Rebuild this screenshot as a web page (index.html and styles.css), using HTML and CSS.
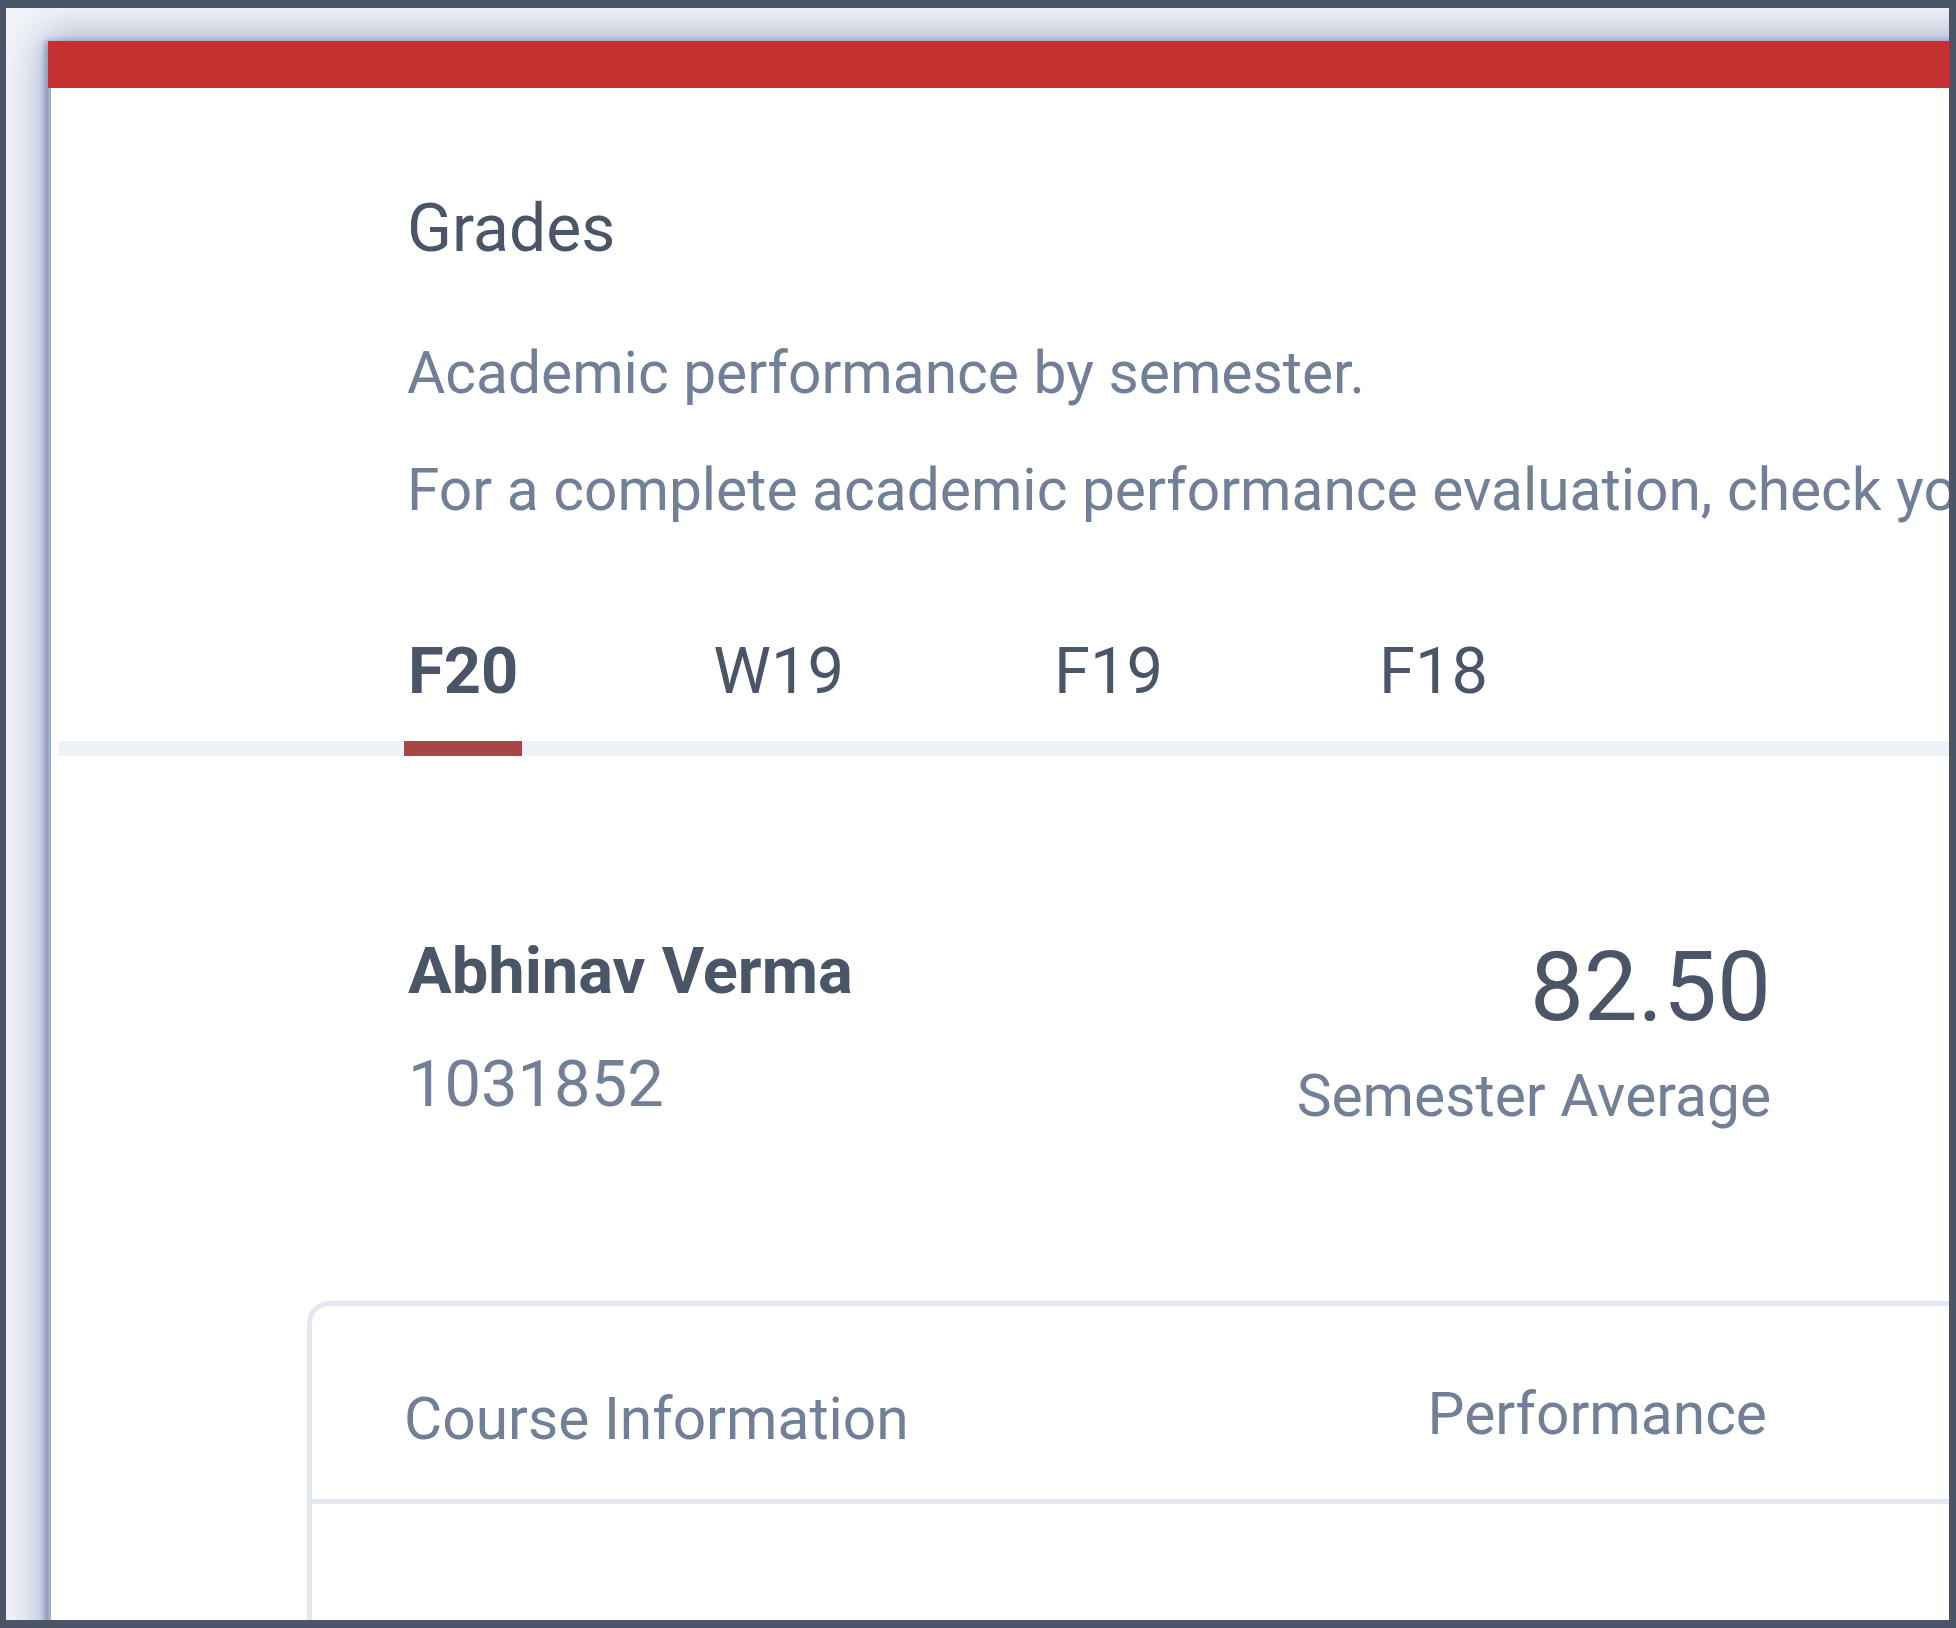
FILE: index.html
```html
<!DOCTYPE html>
<html lang="en">
<head>
<meta charset="utf-8">
<title>Grades</title>
<link rel="stylesheet" href="styles.css">
</head>
<body>
<div class="viewport">
  <div class="card">
    <div class="card-top"></div>
    <div class="card-body">
      <div class="intro">
        <h1 class="title">Grades</h1>
        <p class="lead">Academic performance by semester.</p>
        <p class="lead">For a complete academic performance evaluation, check your unofficial transcript.</p>
      </div>
      <nav class="tabs">
        <a class="tab active">F20</a>
        <a class="tab">W19</a>
        <a class="tab">F19</a>
        <a class="tab">F18</a>
      </nav>
      <section class="student">
        <div class="who">
          <div class="name">Abhinav Verma</div>
          <div class="sid">1031852</div>
        </div>
        <div class="avg">
          <div class="avg-value">82.50</div>
          <div class="avg-label">Semester Average</div>
        </div>
      </section>
      <div class="table">
        <div class="thead">
          <div class="th-inner">
            <span class="th">Course Information</span>
            <span class="th th-right">Performance</span>
          </div>
        </div>
        <div class="tbody"></div>
      </div>
    </div>
  </div>
</div>
</body>
</html>
```
FILE: styles.css
```css
* { box-sizing: border-box; }
html, body { margin: 0; padding: 0; }
body {
  background: #4a5568;
  padding: 8px 7px 8px 6px;
  font-family: Roboto, "Liberation Sans", sans-serif;
  color: #4a5568;
}
.viewport {
  width: 1943px;
  height: 1612px;
  overflow: hidden;
  background: #f2f5f9;
}
.card {
  margin: 33px 0 0 42px;
  width: 1980px;
  background: #fff;
  box-shadow: 0 0 40px 4px rgba(92, 110, 165, 0.6), -3px 0 6px rgba(110, 128, 175, 0.7);
}
.card-top {
  height: 47px;
  background: #c53030;
}
.card-body {
  border-left: 3px solid #a3b0ca;
  padding-top: 102px;
  padding-bottom: 300px;
}
.intro { margin-left: 356px; }
.title {
  margin: 0;
  font-size: 66px;
  line-height: 78px;
  font-weight: 400;
  color: #4a5568;
}
.lead {
  margin: 30px 0 0;
  font-size: 58.7px;
  line-height: 87px;
  color: #718096;
  white-space: nowrap;
}
.title + .lead { margin-top: 62px; }

.tabs {
  display: flex;
  margin: 98px 0 0 8px;
  border-bottom: 15px solid #edf2f7;
}
.tab {
  display: block;
  padding: 0 4px 31px;
  font-size: 65px;
  line-height: 78px;
  color: #4a5568;
}
.tab:nth-child(1) { margin-left: 345px; }
.tab:nth-child(2) { margin-left: 187px; }
.tab:nth-child(3) { margin-left: 202px; }
.tab:nth-child(4) { margin-left: 208px; }
.tab.active {
  font-weight: 700;
  margin-bottom: -15px;
  border-bottom: 15px solid #a84545;
}

.student {
  display: flex;
  justify-content: space-between;
  align-items: flex-start;
  width: 1363px;
  margin: 176px 0 0 357px;
}
.name {
  font-size: 65px;
  line-height: 78px;
  font-weight: 700;
  color: #4a5568;
}
.sid {
  margin-top: 35px;
  font-size: 65px;
  line-height: 78px;
  color: #718096;
}
.avg { text-align: right; margin-top: -2px; }
.avg-value {
  font-size: 96px;
  line-height: 115px;
  color: #4a5568;
}
.avg-label {
  margin-top: 8px;
  font-size: 58.7px;
  line-height: 87px;
  color: #718096;
}

.table {
  margin: 161px 0 0 256px;
  border: 5px solid #e2e8f0;
  border-radius: 22px;
  background: #fff;
}
.thead {
  padding: 70px 0 36px 92px;
  border-bottom: 5px solid #e2e8f0;
}
.th-inner {
  display: flex;
  justify-content: space-between;
  align-items: flex-start;
  width: 1363px;
}
.th {
  font-size: 58.7px;
  line-height: 87px;
  color: #718096;
}
.th-right { margin-top: -5px; }
.tbody { height: 400px; }
```
